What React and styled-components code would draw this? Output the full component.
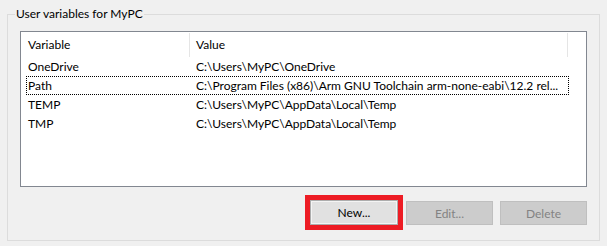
import React from "react";
import styled, { createGlobalStyle } from "styled-components";

const Global = createGlobalStyle`
  html, body { margin: 0; padding: 0; background: #f0f0f0; }
  body {
    width: 607px; height: 246px; overflow: hidden;
    font-family: "Lato", "Noto Sans", sans-serif;
    font-size: 12px; color: #000;
  }
`;

const Group = styled.fieldset`
  margin: 6px 7px 0 7px;
  padding: 0 12px 15px 12px;
  border: 1px solid #dcdcdc;
  min-width: 0;
`;

const Legend = styled.legend`
  margin-left: -5px;
  padding: 0 1px;
  line-height: 16px;
  font-size: 12px;
`;

const List = styled.div`
  margin-top: 9px;
  height: 156px;
  box-sizing: border-box;
  border: 1px solid #828790;
  background: #fff;
`;

const Header = styled.div`
  display: grid;
  grid-template-columns: 168px 1px 377px 1px;
  height: 25px;
`;

const HeadCell = styled.div`
  display: flex;
  align-items: center;
  padding-left: ${(p) => p.$pad}px;
`;

const HeadDivider = styled.div`
  margin-top: 1px;
  background: #e5e5e5;
`;

const Rows = styled.div`
  padding-left: 5px;
`;

const Row = styled.div`
  display: grid;
  grid-template-columns: 170px 1fr;
  width: 543px;
  height: 19px;
  align-items: center;
  box-sizing: border-box;
  outline: ${(p) => (p.$focus ? "1px dotted #000" : "none")};
  outline-offset: -1px;
`;

const Cell = styled.div`
  padding-left: ${(p) => p.$pad}px;
  white-space: nowrap;
  overflow: hidden;
`;

const Buttons = styled.div`
  display: flex;
  justify-content: flex-end;
  align-items: flex-end;
  height: 25px;
  margin-top: 13px;
`;

const Button = styled.button`
  width: ${(p) => (p.$marked ? 88 : 87)}px;
  height: ${(p) => (p.$marked ? 25 : 24)}px;
  box-sizing: border-box;
  margin: 0 0 0 ${(p) => p.$gap || 0}px;
  padding: 0;
  font-family: inherit;
  font-size: 12px;
  border: 1px solid ${(p) => (p.disabled ? "#bfbfbf" : "#adadad")};
  background: ${(p) => (p.disabled ? "#cccccc" : "#e1e1e1")};
  color: ${(p) => (p.disabled ? "#838383" : "#000")};
  box-shadow: ${(p) => (p.$marked ? "inset 0 0 0 1px #f4f4f4" : "none")};
  outline: ${(p) => (p.$marked ? "5px solid #ed1c24" : "none")};
  outline-offset: 0;
`;

const rows = [
  ["OneDrive", "C:\\Users\\MyPC\\OneDrive"],
  ["Path", "C:\\Program Files (x86)\\Arm GNU Toolchain arm-none-eabi\\12.2 rel..."],
  ["TEMP", "C:\\Users\\MyPC\\AppData\\Local\\Temp"],
  ["TMP", "C:\\Users\\MyPC\\AppData\\Local\\Temp"],
];

export default function App() {
  return (
    <>
      <Global />
      <Group>
        <Legend>User variables for MyPC</Legend>
        <List>
          <Header>
            <HeadCell $pad={7}>Variable</HeadCell>
            <HeadDivider />
            <HeadCell $pad={6}>Value</HeadCell>
            <HeadDivider />
          </Header>
          <Rows>
            {rows.map(([n, v]) => (
              <Row key={n} $focus={n === "Path"}>
                <Cell $pad={2}>{n}</Cell>
                <Cell $pad={0}>{v}</Cell>
              </Row>
            ))}
          </Rows>
        </List>
        <Buttons>
          <Button $marked>New...</Button>
          <Button disabled $gap={8}>Edit...</Button>
          <Button disabled $gap={7}>Delete</Button>
        </Buttons>
      </Group>
    </>
  );
}
